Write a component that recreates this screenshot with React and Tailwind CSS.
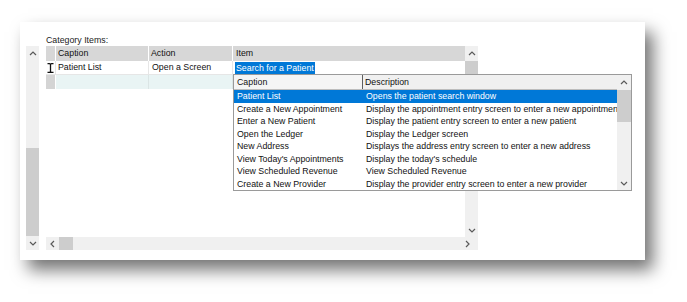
import React from "react";

const font = { fontFamily: '"Liberation Sans", Arial, sans-serif' };

const Chev = ({ dir }) => {
  const paths = {
    up: "M1 4 L4 1 L7 4",
    down: "M1 1 L4 4 L7 1",
    left: "M4 1 L1 4 L4 7",
    right: "M1 1 L4 4 L1 7",
  };
  const vert = dir === "up" || dir === "down";
  return (
    <svg width={vert ? 8 : 5} height={vert ? 5 : 8} viewBox={vert ? "0 0 8 5" : "0 0 5 8"}>
      <path d={paths[dir]} fill="none" stroke="#5a5a5a" strokeWidth="1.2" />
    </svg>
  );
};

const IBeam = () => (
  <svg width="7" height="10" viewBox="0 0 7 10">
    <path d="M0.5 0.7 H2.5 Q3.5 0.7 3.5 1.7 V8.3 Q3.5 9.3 2.5 9.3 H0.5 M6.5 0.7 H4.5 Q3.5 0.7 3.5 1.7 M3.5 8.3 Q3.5 9.3 4.5 9.3 H6.5" fill="none" stroke="#111" strokeWidth="1.3" />
  </svg>
);

const items = [
  ["Patient List", "Opens the patient search window"],
  ["Create a New Appointment", "Display the appointment entry screen to enter a new appointment"],
  ["Enter a New Patient", "Display the patient entry screen to enter a new patient"],
  ["Open the Ledger", "Display the Ledger screen"],
  ["New Address", "Displays the address entry screen to enter a new address"],
  ["View Today's Appointments", "Display the today's schedule"],
  ["View Scheduled Revenue", "View Scheduled Revenue"],
  ["Create a New Provider", "Display the provider entry screen to enter a new provider"],
];

const Dropdown = () => (
  <div className="absolute left-[187px] top-[28px] w-[399px] h-[117px] bg-white border border-[#9a9a9a] flex">
    <div className="flex-1 flex flex-col min-w-0">
      <div className="h-[15px] flex bg-[#f0f0f0] border-b border-[#bdbdbd]">
        <div className="w-[129px] pl-[3px] pt-[1px] flex items-center border-r border-[#5f5f5f] bg-[#f5f5f5]">Caption</div>
        <div className="flex-1 pl-[2px] pt-[1px] flex items-center">Description</div>
      </div>
      {items.map(([c, d], i) => (
        <div
          key={c}
          className={`h-[12.5px] pt-[1px] flex items-center whitespace-nowrap overflow-hidden ${i === 0 ? "bg-[#0078d7] text-white" : "text-[#111]"}`}
        >
          <div className="w-[129px] pl-[3px] shrink-0">{c}</div>
          <div className="flex-1 pl-[3px] overflow-hidden">{d}</div>
        </div>
      ))}
    </div>
    <div className="w-[14px] bg-[#f0f0f0] flex flex-col items-center">
      <div className="h-[15px] flex items-center"><Chev dir="up" /></div>
      <div className="w-full h-[32px] bg-[#cdcdcd]" />
      <div className="flex-1" />
      <div className="h-[13px] flex items-center"><Chev dir="down" /></div>
    </div>
  </div>
);

const Grid = () => (
  <div className="relative w-[432px] h-[204px] flex flex-col">
    <div className="flex h-[191px]">
      <div className="w-[419px] bg-white">
        <div className="flex h-[15px] bg-[#d7d7d7]">
          <div className="w-[10px] border-r border-white" />
          <div className="w-[93px] pl-[2px] pt-[1px] flex items-center border-r border-white">Caption</div>
          <div className="w-[84px] pl-[2px] pt-[1px] flex items-center border-r border-white">Action</div>
          <div className="flex-1 pl-[3px] pt-[1px] flex items-center">Item</div>
        </div>
        <div className="flex h-[14px] border-b border-[#e6e6e6]">
          <div className="w-[10px] flex items-center justify-center border-r border-[#e6e6e6]"><IBeam /></div>
          <div className="w-[93px] pl-[2px] pt-[1px] flex items-center border-r border-[#e6e6e6]">Patient List</div>
          <div className="w-[84px] pl-[3px] pt-[1px] flex items-center border-r border-[#e6e6e6]">Open a Screen</div>
          <div className="flex-1 pl-[2px] flex items-center">
            <span className="bg-[#0078d7] text-white px-[1px] leading-[12px]">Search for a Patient</span>
          </div>
        </div>
        <div className="flex h-[14px] bg-[#e9f4f4]">
          <div className="w-[10px] bg-[#d4d4d4] border-r border-white" />
          <div className="w-[93px] border-r border-[#dbe5e5]" />
          <div className="w-[84px] border-r border-[#dbe5e5]" />
          <div className="flex-1" />
        </div>
      </div>
      <div className="w-[13px] bg-[#f0f0f0] flex flex-col items-center">
        <div className="h-[15px] flex items-center"><Chev dir="up" /></div>
        <div className="w-full h-[60px] bg-[#cdcdcd]" />
        <div className="flex-1" />
        <div className="h-[14px] flex items-center"><Chev dir="down" /></div>
      </div>
    </div>
    <div className="h-[13px] bg-[#f0f0f0] flex items-center">
      <div className="w-[13px] flex justify-center"><Chev dir="left" /></div>
      <div className="w-[14px] h-full bg-[#cdcdcd]" />
      <div className="flex-1" />
      <div className="w-[22px] flex justify-center"><Chev dir="right" /></div>
    </div>
    <Dropdown />
  </div>
);

export default function App() {
  return (
    <div className="w-[687px] h-[302px] bg-white overflow-hidden text-[8.8px] text-[#111]" style={font}>
      <div className="ml-[20px] mt-[22px] w-[625px] h-[238px] bg-white shadow-[8px_10px_16px_rgba(0,0,0,0.55)]">
        <div className="pl-[26px] pt-[12px] h-[24px] leading-[12px] text-[#222]">Category Items:</div>
        <div className="flex gap-[7px] pl-[6px]">
          <div className="w-[13px] h-[204px] bg-[#f0f0f0] flex flex-col items-center">
            <div className="h-[15px] flex items-center"><Chev dir="up" /></div>
            <div className="h-[87px]" />
            <div className="w-full h-[88px] bg-[#cdcdcd]" />
            <div className="flex-1 flex items-center"><Chev dir="down" /></div>
          </div>
          <Grid />
        </div>
      </div>
    </div>
  );
}
